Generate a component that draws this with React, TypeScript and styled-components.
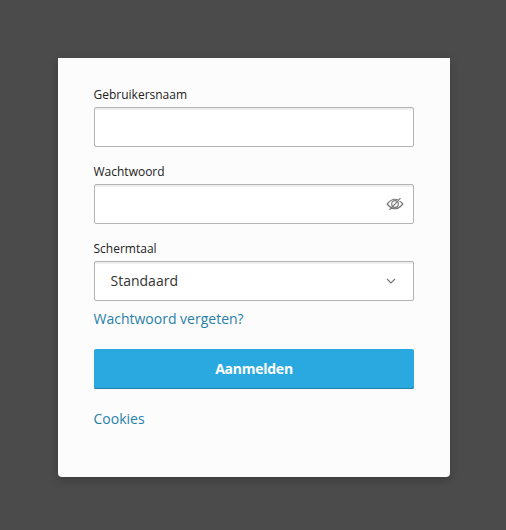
import React from "react";
import styled, { createGlobalStyle } from "styled-components";

const GlobalStyle = createGlobalStyle`
  * { box-sizing: border-box; }
  body { margin: 0; background: #4b4b4b; font-family: "Open Sans", sans-serif; color: #222; }
`;
const Page = styled.main`
  height: 530px;
  padding: 58px 56px 0 58px;
`;
const Card = styled.form`
  height: 419px;
  padding: 28px 36px 0;
  background: #fcfcfc;
  border-radius: 0 0 4px 4px;
  box-shadow: 0 3px 10px rgba(0, 0, 0, 0.2);
`;
const Field = styled.div<{ $last?: boolean }>`
  height: ${(p) => (p.$last ? 69 : 77)}px;
`;
const Label = styled.label`
  display: block;
  height: 21px;
  margin-left: -0.5px;
  font-size: 12px;
  line-height: 18px;
`;
const Control = styled.div`
  display: flex;
  align-items: center;
  height: 40px;
  padding-right: 9px;
  background: #fff;
  border: 1px solid #b3b3b3;
  border-radius: 2px;
  box-shadow: inset 0 2px 0 #eee;
`;
const Input = styled.input`
  flex: 1;
  min-width: 0;
  height: 32px;
  padding: 0 16px;
  border: 0;
  outline: 0;
  background: transparent;
  font: 14px "Open Sans", sans-serif;
`;
const Value = styled.span`
  flex: 1;
  padding: 0 0 2px 15.5px;
  color: #333;
  font-size: 14px;
`;
const Link = styled.a`
  display: block;
  width: max-content;
  margin-left: -0.5px;
  color: #2980a8;
  font-size: 14px;
  line-height: 20px;
`;
const Button = styled.button`
  display: block;
  width: 100%;
  height: 40px;
  margin: 20px 0;
  padding: 0 0 1px;
  border: 0;
  border-radius: 2px;
  background: #29a9df;
  box-shadow: inset 0 -1px 0 #2580a8;
  color: #fff;
  font: 700 14px "Open Sans", sans-serif;
  letter-spacing: -0.25px;
`;

export default function App() {
  return (
    <>
      <GlobalStyle />
      <Page>
        <Card>
          <Field>
            <Label htmlFor="user">Gebruikersnaam</Label>
            <Control><Input id="user" /></Control>
          </Field>
          <Field>
            <Label htmlFor="pass">Wachtwoord</Label>
            <Control>
              <Input id="pass" type="password" />
              <svg width="18" height="16" viewBox="0 0 18 16" fill="none" stroke="#777" strokeWidth="1.2">
                <path d="M1.2 8Q9-1.5 16.8 8Q9 17.5 1.2 8ZM3.5 13.8L14.5 2.2" />
                <circle cx="9" cy="8" r="3.3" />
              </svg>
            </Control>
          </Field>
          <Field $last>
            <Label>Schermtaal</Label>
            <Control>
              <Value>Standaard</Value>
              <svg width="26" height="16" viewBox="0 0 26 16" fill="none" stroke="#777" strokeWidth="1.2">
                <path d="M9 6l4 4 4-4" />
              </svg>
            </Control>
          </Field>
          <Link>Wachtwoord vergeten?</Link>
          <Button type="button">Aanmelden</Button>
          <Link>Cookies</Link>
        </Card>
      </Page>
    </>
  );
}
